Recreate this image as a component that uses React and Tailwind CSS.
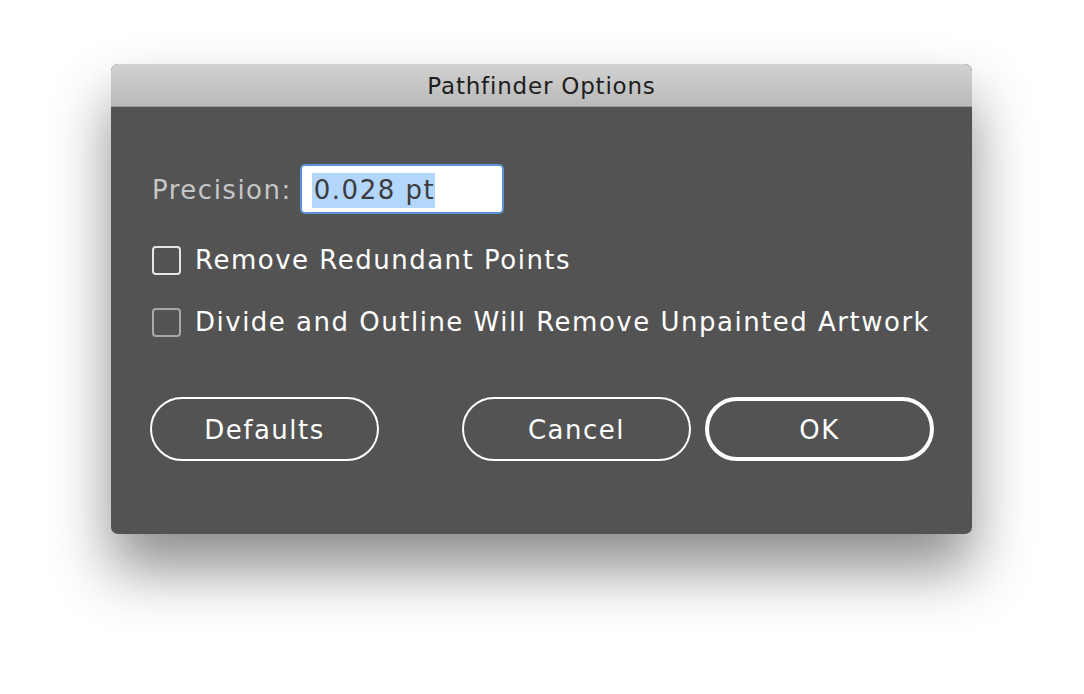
export default function App() {
  return (
    <div className="w-[1084px] h-[694px] bg-white pt-[64px] pl-[111px]" style={{ fontFamily: '"DejaVu Sans", "Open Sans", sans-serif' }}>
      <div className="w-[861px] h-[470px] rounded-[7px] overflow-hidden bg-[#535353] shadow-[0_35px_60px_rgba(0,0,0,0.45)] flex flex-col">
        {/* Title bar */}
        <div className="h-[43px] shrink-0 flex items-center justify-center pt-[3px] bg-gradient-to-b from-[#d2d2d2] to-[#b9b9b9] border-b border-[#9a9a9a]">
          <span className="text-[23px] text-[#1e1e1e] tracking-[0.8px]">Pathfinder Options</span>
        </div>

        <div className="flex flex-col pl-[41px] pr-[38px]">
          {/* Precision */}
          <div className="flex items-center mt-[57px] h-[50px]">
            <span className="text-[26px] text-[#c6c6c6] tracking-[1.5px] mr-[8px] pt-[3px]">Precision:</span>
            <div className="w-[204px] h-[50px] rounded-[5px] border-2 border-[#5b93d3] bg-white flex items-center pl-[10px] pt-[2px]">
              <span className="bg-[#b3d6fd] text-[26px] text-[#3c3c3c] tracking-[1.5px] leading-[35px] pl-[2px]">0.028 pt</span>
            </div>
          </div>

          {/* Checkboxes */}
          <label className="flex items-center mt-[31px] h-[30px]">
            <span className="w-[29px] h-[29px] rounded-[4px] border-2 border-[#e6e6e6] mr-[14px] shrink-0"></span>
            <span className="text-[26px] text-white tracking-[1.5px] pt-[1px]">Remove Redundant Points</span>
          </label>
          <label className="flex items-center mt-[32px] h-[30px]">
            <span className="w-[29px] h-[29px] rounded-[4px] border-2 border-[#a8a8a8] mr-[14px] shrink-0"></span>
            <span className="text-[26px] text-white tracking-[1.5px] pt-[1px]">Divide and Outline Will Remove Unpainted Artwork</span>
          </label>

          {/* Buttons */}
          <div className="flex items-center mt-[60px] -ml-[2px]">
            <button className="w-[229px] h-[64px] rounded-full border-2 border-white text-white text-[26px] tracking-[1.5px] pt-[2px]">Defaults</button>
            <button className="w-[229px] h-[64px] rounded-full border-2 border-white text-white text-[26px] tracking-[1.5px] pt-[2px] ml-[83px]">Cancel</button>
            <button className="w-[229px] h-[64px] rounded-full border-[4px] border-white text-white text-[26px] tracking-[1.5px] pt-[2px] ml-[14px]">OK</button>
          </div>
        </div>
      </div>
    </div>
  )
}
